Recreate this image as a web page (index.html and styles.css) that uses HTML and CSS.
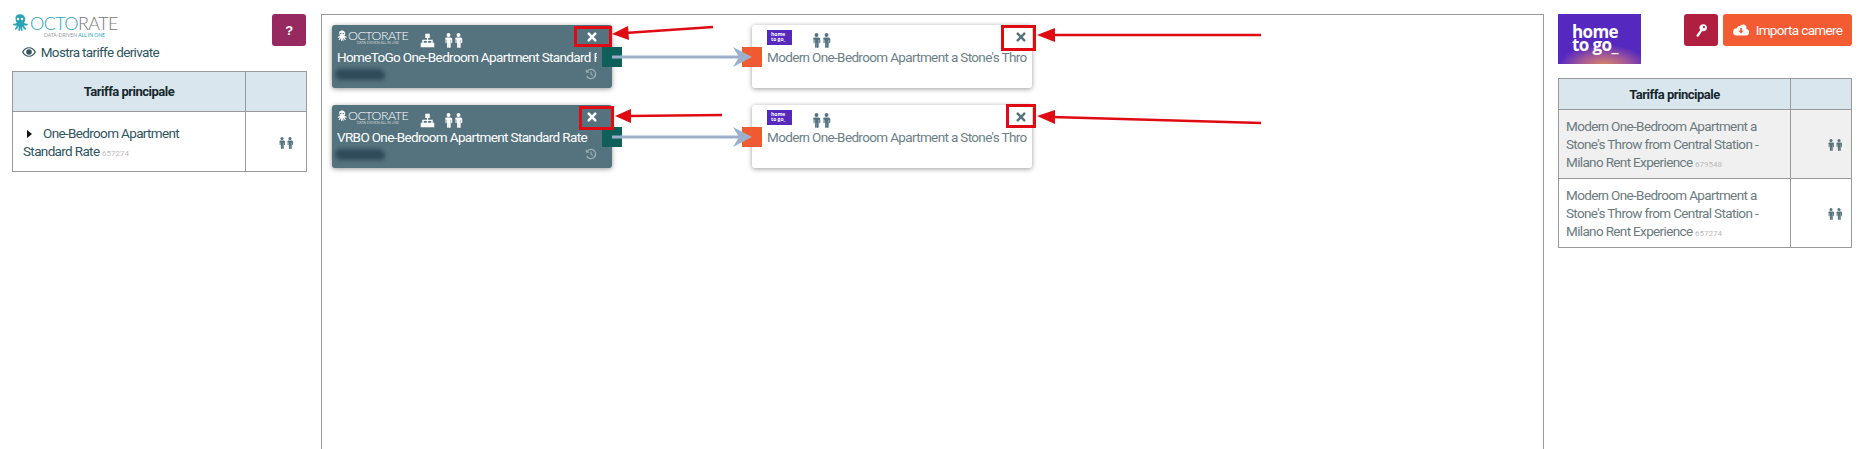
FILE: index.html
```html
<!DOCTYPE html>
<html lang="en">
<head>
    <meta charset="UTF-8">
    <meta name="viewport" content="width=device-width, initial-scale=1.0">
    <title>Mapping tariffe</title>
    <link rel="stylesheet" href="styles.css">
</head>
<body>
    <svg class="defs" width="0" height="0">
        <symbol id="male" viewBox="0 0 10 20">
            <circle cx="5" cy="2.6" r="2.6"/>
            <path d="M2.2 6h5.6C9 6 10 7 10 8.2v4.6c0 1.100-1.500 1.100-1.500 0V9h-.6v9.700c0 1.700-2.300 1.700-2.300 0V13.500h-.2v5.200c0 1.700-2.300 1.700-2.300 0V9h-.6v3.800c0 1.100-1.500 1.100-1.500 0V8.200C0 7 1 6 2.200 6z"/>
        </symbol>
        <symbol id="sitemap" viewBox="0 0 20 20">
            <path d="M7 1h6v5.500h-2.200V9H17v4h2v6h-6v-6h2v-2.300h-4.200V13H13v6H7v-6h2.200v-2.300H5V13h2v6H1v-6h2V9h6.200V6.500H7z"/>
        </symbol>
        <symbol id="times" viewBox="0 0 14 14">
            <path d="M3.200.8 7 4.600 10.800.8c.4-.4 1-.4 1.400 0l1 1c.4.4.4 1 0 1.400L9.400 7l3.800 3.800c.4.4.4 1 0 1.400l-1 1c-.4.4-1 .4-1.400 0L7 9.400l-3.800 3.800c-.4.4-1 .4-1.400 0l-1-1c-.4-.4-.4-1 0-1.400L4.600 7 .8 3.200C.4 2.800.4 2.200.8 1.800l1-1c.4-.4 1-.4 1.400 0z"/>
        </symbol>
        <symbol id="octopus" viewBox="0 0 20 22">
            <path fill-rule="evenodd" d="M10 0c4 0 6.500 2.700 6.500 6.200 0 1.800-.6 3.200-1.500 4.300.8 1.200 2 1.600 3.400 1.300 1.300-.3 2 1.400.7 2-1.400.7-2.900.6-4.100-.1.300 1.500 1.200 2.800 2.300 3.800 1 1-.2 2.500-1.400 1.600-1.500-1.100-2.500-2.700-3-4.400-.2 2-.1 3.500.3 5 .3 1.300-1.500 1.800-2 .5-.3-1-.5-2.600-.6-4.600-.1 2-.3 3.600-.7 4.600-.5 1.300-2.300.8-2-.5.400-1.500.5-3 .3-5-.5 1.700-1.500 3.300-3 4.400-1.200.9-2.400-.6-1.400-1.600 1.100-1 2-2.300 2.300-3.800-1.200.7-2.700.8-4.100.1-1.300-.6-.6-2.300.7-2 1.400.3 2.600-.1 3.400-1.300-.9-1.100-1.500-2.500-1.500-4.300C3.500 2.700 6 0 10 0zM7.500 4.500a1.500 1.500 0 1 0 0 3 1.500 1.500 0 0 0 0-3zm5 0a1.500 1.500 0 1 0 0 3 1.500 1.500 0 0 0 0-3z"/>
        </symbol>
    </svg>

    <div class="page">
        <aside class="side side-left">
            <div class="side-top">
                <div>
                    <div class="octo-logo">
                        <svg class="octo-mark"><use href="#octopus"/></svg>
                        <div>
                            <div class="octo-name">OCTO<span>RATE</span></div>
                            <div class="octo-tag">DATA-DRIVEN <b>ALL IN ONE</b></div>
                        </div>
                    </div>
                    <a class="toggle-derived" href="#">
                        <svg class="eye" viewBox="0 0 16 11"><path d="M8 0C4.500 0 1.600 2.100 0 5.500 1.600 8.900 4.500 11 8 11s6.400-2.100 8-5.500C14.400 2.100 11.500 0 8 0zm0 1.200c2.700 0 5 1.700 6.400 4.300C13 8.100 10.700 9.800 8 9.800S3 8.100 1.600 5.500C3 2.900 5.300 1.200 8 1.200zM8 2.300a3.200 3.200 0 1 0 0 6.400 3.200 3.200 0 0 0 0-6.400z"/></svg>
                        Mostra tariffe derivate
                    </a>
                </div>
                <a class="btn btn-help" href="#">?</a>
            </div>
            <table class="rates rates-left">
                <tr><th>Tariffa principale</th><th></th></tr>
                <tr>
                    <td><span class="caret"></span>One-Bedroom Apartment<br>Standard Rate <small>657274</small></td>
                    <td class="occ"><svg class="pair"><use href="#male" x="0" width="8"/><use href="#male" x="8" width="8"/></svg></td>
                </tr>
            </table>
        </aside>

        <main class="canvas">
            <div class="node node-src">
                <div class="node-head">
                    <div class="mini-octo">
                        <svg><use href="#octopus"/></svg>
                        <div>OCTORATE<small>DATA-DRIVEN ALL IN ONE</small></div>
                    </div>
                    <svg class="ic-tree"><use href="#sitemap"/></svg>
                    <svg class="pair"><use href="#male" x="0" width="9"/><use href="#male" x="10" width="9"/></svg>
                    <svg class="ic-close"><use href="#times"/></svg>
                </div>
                <div class="node-title">HomeToGo One-Bedroom Apartment Standard Rate</div>
                <div class="node-foot">
                    <span class="smudge"></span>
                    <svg class="ic-history" viewBox="0 0 14 14"><path d="M7 1a6 6 0 1 1-5.600 8.200l1.300-.5A4.600 4.600 0 1 0 3.500 3.900L5 5.400H1V1.400l1.500 1.500A6 6 0 0 1 7 1zm-.6 3h1.300v3l2 1.300-.7 1.100-2.600-1.700z"/></svg>
                </div>
                <span class="port port-out"></span>
            </div>
            <div class="node node-dst">
                <div class="node-head">
                    <div class="mini-htg">home<br>to go_</div>
                    <svg class="pair"><use href="#male" x="0" width="9"/><use href="#male" x="10" width="9"/></svg>
                    <svg class="ic-close"><use href="#times"/></svg>
                </div>
                <div class="node-title">Modern One-Bedroom Apartment a Stone's Throw from Central Station</div>
                <span class="port port-in"></span>
            </div>
            <div class="node node-src">
                <div class="node-head">
                    <div class="mini-octo">
                        <svg><use href="#octopus"/></svg>
                        <div>OCTORATE<small>DATA-DRIVEN ALL IN ONE</small></div>
                    </div>
                    <svg class="ic-tree"><use href="#sitemap"/></svg>
                    <svg class="pair"><use href="#male" x="0" width="9"/><use href="#male" x="10" width="9"/></svg>
                    <svg class="ic-close"><use href="#times"/></svg>
                </div>
                <div class="node-title">VRBO One-Bedroom Apartment Standard Rate</div>
                <div class="node-foot">
                    <span class="smudge"></span>
                    <svg class="ic-history" viewBox="0 0 14 14"><path d="M7 1a6 6 0 1 1-5.600 8.200l1.300-.5A4.600 4.600 0 1 0 3.500 3.900L5 5.400H1V1.400l1.500 1.500A6 6 0 0 1 7 1zm-.6 3h1.300v3l2 1.300-.7 1.100-2.600-1.700z"/></svg>
                </div>
                <span class="port port-out"></span>
            </div>
            <div class="node node-dst">
                <div class="node-head">
                    <div class="mini-htg">home<br>to go_</div>
                    <svg class="pair"><use href="#male" x="0" width="9"/><use href="#male" x="10" width="9"/></svg>
                    <svg class="ic-close"><use href="#times"/></svg>
                </div>
                <div class="node-title">Modern One-Bedroom Apartment a Stone's Throw from Central Station</div>
                <span class="port port-in"></span>
            </div>

            <!-- connections and annotations, in page coordinates -->
            <svg class="overlay" viewBox="322 15 1222 434">
                <g class="link">
                    <path d="M612 57H749"/>
                    <path class="head" d="M733 47l19 10-19 10 6-10z"/>
                    <path d="M612 137H749"/>
                    <path class="head" d="M733 127l19 10-19 10 6-10z"/>
                </g>
                <g class="mark">
                    <rect x="575.500" y="27.500" width="35" height="18"/>
                    <rect x="580.500" y="107.500" width="32" height="21"/>
                    <rect x="1002.500" y="26.500" width="32" height="23"/>
                    <rect x="1007.500" y="105.500" width="27" height="21"/>
                    <path d="M713 27 625 33"/>
                    <path d="M722 115 628 116"/>
                    <path d="M1261 35 1052 35"/>
                    <path d="M1261 123 1052 117"/>
                    <polygon points="612,34 628,26 629,40"/>
                    <polygon points="615,116 631,109 631,123"/>
                    <polygon points="1037,35 1055,28 1055,42"/>
                    <polygon points="1037,116 1055,110 1055,124"/>
                </g>
            </svg>
        </main>

        <aside class="side side-right">
            <div class="side-top side-top-right">
                <div class="htg-logo">home<br>to go_</div>
                <div class="actions">
                    <a class="btn btn-key" href="#">
                        <svg viewBox="0 0 14 16"><path d="M9.500 0a4.500 4.500 0 1 1-1.700 8.700L3.400 15.300c-.5.800-1.500.9-2.200.4-.7-.5-.8-1.400-.3-2.100l4.500-6.300A4.500 4.500 0 0 1 9.500 0zm.6 2.200a1.400 1.400 0 1 0 0 2.800 1.400 1.400 0 0 0 0-2.800z"/></svg>
                    </a>
                    <a class="btn btn-import" href="#">
                        <svg viewBox="0 0 20 14"><path d="M16.300 5.900A4 4 0 0 0 12.500 0C10.900 0 9.500.9 8.800 2.300A2.700 2.700 0 0 0 5 4.800 4.500 4.500 0 0 0 4.500 14H16a4 4 0 0 0 .3-8.100zM10 11.500 6.500 8H9V4.500h2V8h2.500z"/></svg>
                        Importa camere
                    </a>
                </div>
            </div>
            <table class="rates rates-right">
                <tr><th>Tariffa principale</th><th></th></tr>
                <tr class="row-alt">
                    <td>Modern One-Bedroom Apartment a Stone's Throw from Central Station - Milano Rent Experience <small>679548</small></td>
                    <td class="occ"><svg class="pair"><use href="#male" x="0" width="8"/><use href="#male" x="8" width="8"/></svg></td>
                </tr>
                <tr>
                    <td>Modern One-Bedroom Apartment a Stone's Throw from Central Station - Milano Rent Experience <small>657274</small></td>
                    <td class="occ"><svg class="pair"><use href="#male" x="0" width="8"/><use href="#male" x="8" width="8"/></svg></td>
                </tr>
            </table>
        </aside>
    </div>
</body>
</html>
```

FILE: styles.css
```css
* {box-sizing: border-box;}

html, body {
    height: 100%;
}

body {
    margin: 0;
    overflow: hidden;
    background: #fff;
    color: #2f5560;
    font-family: Roboto, sans-serif;
    font-size: 13.500px;
    letter-spacing: -.65px;
}

a {
    text-decoration: none;
}

.defs {
    display: block;
    height: 0;
}

.page {
    display: flex;
    gap: 14px;
    height: 449px;
    padding: 14px 19px 0 12px;
}

.side {
    flex: none;
    width: 295px;
}

.side-right {
    width: 294px;
}

.side-top {
    display: flex;
    justify-content: space-between;
    align-items: flex-start;
    height: 57px;
}

.side-left .side-top {
    padding-right: 1px;
}

.side-top-right {
    height: 64px;
}

/* logos */
.octo-logo {
    display: flex;
    gap: 2px;
}

.octo-mark {
    width: 16px;
    height: 18px;
    fill: #2aa3b3;
}

.octo-name {
    font-family: Lato, sans-serif;
    font-size: 18px;
    line-height: 18px;
    font-weight: 300;
    color: #2aa3b3;
    letter-spacing: -.6px;
}

.octo-name span {
    color: #777;
}

.octo-tag {
    margin-left: 14px;
    font-family: Lato, sans-serif;
    font-size: 5px;
    line-height: 6px;
    letter-spacing: 0;
    color: #999;
}

.octo-tag b {
    color: #2aa3b3;
    font-weight: 400;
}

.toggle-derived {
    display: block;
    margin: 5px 0 0 10px;
    color: #2f5560;
    line-height: 18px;
    white-space: nowrap;
}

.eye {
    width: 14px;
    height: 10px;
    margin-right: 2px;
    fill: #2f5560;
}

.htg-logo {
    width: 83px;
    height: 50px;
    padding: 11px 0 0 14px;
    background: radial-gradient(ellipse 45px 22px at 55% 105%, #e08a5c 0%, #a0569a 55%, transparent 100%), #5528c0;
    color: #fff;
    font-family: "Open Sans", sans-serif;
    font-size: 17px;
    line-height: 13px;
    font-weight: 700;
    letter-spacing: -.6px;
}

/* buttons */
.actions {
    display: flex;
    gap: 5px;
}

.btn {
    display: flex;
    align-items: center;
    justify-content: center;
    height: 32px;
    border-radius: 3px;
    color: #fff;
}

.btn-help {
    width: 34px;
    background: #962a60;
    font-family: "Liberation Sans", sans-serif;
    font-size: 13px;
    font-weight: 700;
}

.btn-key {
    width: 34px;
    background: #b01f3f;
}

.btn-key svg {
    width: 11px;
    height: 13px;
    fill: #fff;
}

.btn-import {
    width: 129px;
    gap: 7px;
    background: #f35b32;
}

.btn-import svg {
    width: 16px;
    height: 12px;
    fill: #fff;
}

/* tables */
.rates {
    width: 100%;
    border-collapse: collapse;
    table-layout: fixed;
}

.rates th,
.rates td {
    border: 1px solid #999;
}

.rates th {
    background: #d9e6ed;
    color: #16282d;
    font-size: 13px;
    font-weight: 700;
    letter-spacing: -.5px;
}

.rates th:last-child,
.rates td:last-child {
    width: 61px;
}

.rates small {
    font-size: 8px;
    line-height: 1;
    letter-spacing: 0;
    color: #bbb;
}

.rates-left th {
    height: 40px;
}

.rates-left td {
    height: 60px;
    padding: 9px 10px;
    color: #2f5560;
    line-height: 18px;
}

.rates-right th {
    height: 31px;
}

.rates-right td {
    height: 69px;
    padding: 7px;
    color: #6c7a7e;
    line-height: 18px;
}

.row-alt td {
    background: #f0f0f0;
}

.caret {
    display: inline-block;
    margin: 0 11px 0 4px;
    border-left: 5px solid #111;
    border-top: 4px solid transparent;
    border-bottom: 4px solid transparent;
}

.rates td.occ {
    padding: 0 8px 0 0;
    text-align: right;
}

.rates-left td.occ {
    padding-right: 12px;
}

.occ .pair {
    width: 16px;
    height: 12px;
    vertical-align: middle;
}

.pair {
    flex: none;
    width: 19px;
    height: 15px;
    fill: #55737e;
}

/* diagram */
.canvas {
    position: relative;
    flex: 1;
    display: grid;
    grid-template-columns: 280px 280px;
    grid-template-rows: 63px 63px;
    gap: 17px 140px;
    align-content: start;
    padding: 10px;
    border: 1px solid #999;
    border-bottom: 0;
}

.node {
    position: relative;
    padding: 5px 5px 0;
    border-radius: 3px;
    box-shadow: 0 1px 5px rgba(0, 0, 0, .4);
}

.node-src {
    background: #55737e;
    color: #fff;
}

.node-dst {
    padding-left: 15px;
    background: #fff;
    color: #6c7f86;
}

.node-head {
    display: flex;
    align-items: flex-start;
    height: 17px;
}

.node-head .pair {
    margin-top: 3px;
}

.node-src .pair {
    fill: #fff;
    margin-left: 9px;
}

.node-dst .pair {
    fill: #55737e;
    margin-left: 20px;
}

.mini-octo {
    display: flex;
    align-items: flex-start;
    gap: 1px;
    width: 83px;
    color: #fff;
    font-family: Lato, sans-serif;
    font-size: 12.500px;
    line-height: 11px;
    font-weight: 300;
    letter-spacing: -.5px;
}

.mini-octo svg {
    flex: none;
    width: 10px;
    height: 12px;
    fill: #fff;
}

.mini-octo small {
    display: block;
    margin-left: 9px;
    font-size: 3.500px;
    line-height: 4px;
    letter-spacing: 0;
    white-space: nowrap;
}

.mini-htg {
    width: 25px;
    height: 15px;
    padding: 2px 0 0 4px;
    background: #5528c0;
    color: #fff;
    font-family: "Open Sans", sans-serif;
    font-size: 5px;
    line-height: 5px;
    font-weight: 700;
    letter-spacing: 0;
}

.ic-tree {
    width: 15px;
    height: 15px;
    margin-top: 3px;
    fill: #fff;
}

.ic-close {
    width: 10px;
    height: 10px;
    margin: 2px 10px 0 auto;
    fill: #fff;
}

.node-dst .ic-close {
    fill: #55737e;
    margin-right: 1px;
}

.node-title {
    overflow: hidden;
    width: 260px;
    line-height: 20px;
    white-space: nowrap;
}

.node-foot {
    display: flex;
    justify-content: space-between;
    align-items: center;
    height: 14px;
    padding-right: 10px;
}

.smudge {
    width: 50px;
    height: 11px;
    margin-left: -2px;
    border-radius: 6px 8px 4px 7px;
    background: #2f4a58;
    filter: blur(2px);
}

.ic-history {
    width: 12px;
    height: 12px;
    fill: #9aafb6;
}

.port {
    position: absolute;
    top: 22px;
    width: 20px;
    height: 20px;
}

.port-out {
    right: -10px;
    background: #0f5f5a;
}

.port-in {
    left: -10px;
    background: #f05a32;
}

.overlay {
    position: absolute;
    top: 0;
    left: 0;
    width: 1222px;
    height: 434px;
    pointer-events: none;
}

.link path {
    fill: none;
    stroke: #9db0cb;
    stroke-width: 3;
}

.link .head {
    fill: #9db0cb;
    stroke: none;
}

.mark rect {
    fill: none;
    stroke: #e00a12;
    stroke-width: 3;
}

.mark path {
    fill: none;
    stroke: #e00a12;
    stroke-width: 2.500;
}

.mark polygon {
    fill: #e00a12;
}
```
